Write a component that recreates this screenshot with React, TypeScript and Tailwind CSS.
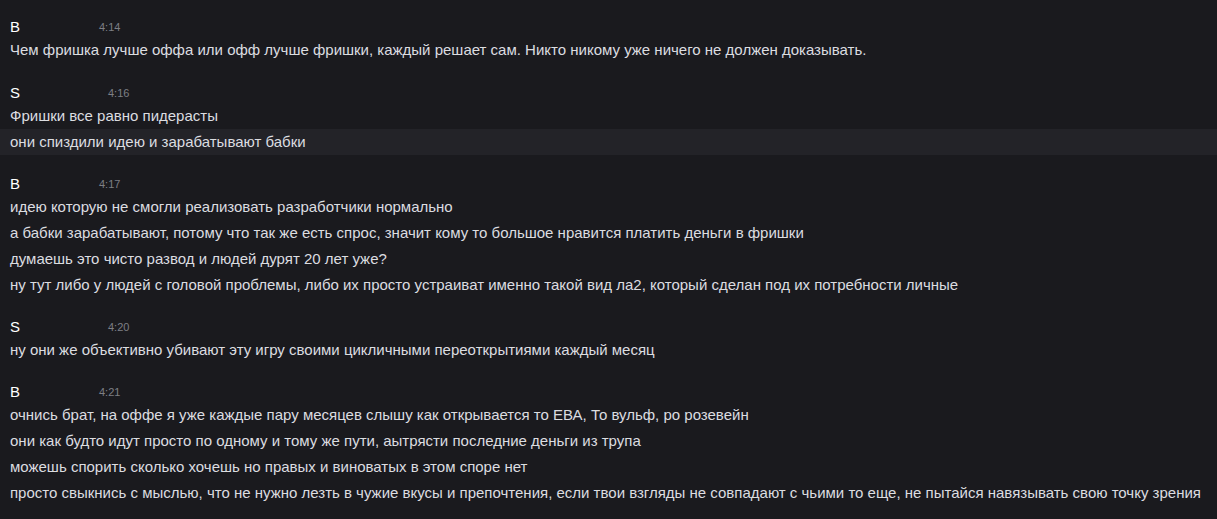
const groups = [
  {
    name: 'B',
    time: '4:14',
    nameWidth: 'w-[89px]',
    lines: [
      'Чем фришка лучше оффа или офф лучше фришки, каждый решает сам. Никто никому уже ничего не должен доказывать.',
    ],
  },
  {
    name: 'S',
    time: '4:16',
    nameWidth: 'w-[98px]',
    lines: ['Фришки все равно пидерасты', 'они спиздили идею и зарабатывают бабки'],
    highlight: 1,
  },
  {
    name: 'B',
    time: '4:17',
    nameWidth: 'w-[89px]',
    lines: [
      'идею которую не смогли реализовать разработчики нормально',
      'а бабки зарабатывают, потому что так же есть спрос, значит кому то большое нравится платить деньги в фришки',
      'думаешь это чисто развод и людей дурят 20 лет уже?',
      'ну тут либо у людей с головой проблемы, либо их просто устраиват именно такой вид ла2, который сделан под их потребности личные',
    ],
  },
  {
    name: 'S',
    time: '4:20',
    nameWidth: 'w-[98px]',
    lines: ['ну они же объективно убивают эту игру своими цикличными переоткрытиями каждый месяц'],
  },
  {
    name: 'B',
    time: '4:21',
    nameWidth: 'w-[89px]',
    lines: [
      'очнись брат, на оффе я уже каждые пару месяцев слышу как открывается то ЕВА, То вульф, ро розевейн',
      'они как будто идут просто по одному и тому же пути, аытрясти последние деньги из трупа',
      'можешь спорить сколько хочешь но правых и виноватых в этом споре нет',
      'просто свыкнись с мыслью, что не нужно лезть в чужие вкусы и препочтения, если твои взгляды не совпадают с чьими то еще, не пытайся навязывать свою точку зрения',
    ],
  },
];

export default function App() {
  return (
    <div className="h-[519px] w-[1217px] overflow-hidden bg-[#1a1a1e] font-['Liberation_Sans',Arial,sans-serif] text-[#dcdde0]">
      {/* date divider, scrolled mostly out of view */}
      <div className="mt-[-13px] flex h-[16px] items-center pl-[815px] text-[12px] font-bold text-[#8a8b90]">
        27 мая 2025 г.
      </div>
      <div className="flex flex-col">
        {groups.map((g, i) => (
          <div key={i} className={i === 0 ? 'mt-[15px]' : i === 1 ? 'mt-[21px]' : 'mt-[20px]'}>
            <div className="flex h-[19px] items-center pl-[10px]">
              <span className={`${g.nameWidth} text-[15px] text-white`}>{g.name}</span>
              <span className="text-[11px] text-[#7d7f85]">{g.time}</span>
            </div>
            {g.lines.map((line, j) => (
              <div
                key={j}
                className={`flex h-[26px] items-center whitespace-nowrap pl-[10px] text-[15px] ${g.highlight === j ? 'bg-[#232328]' : ''}`}
              >
                {line}
              </div>
            ))}
          </div>
        ))}
      </div>
    </div>
  );
}
